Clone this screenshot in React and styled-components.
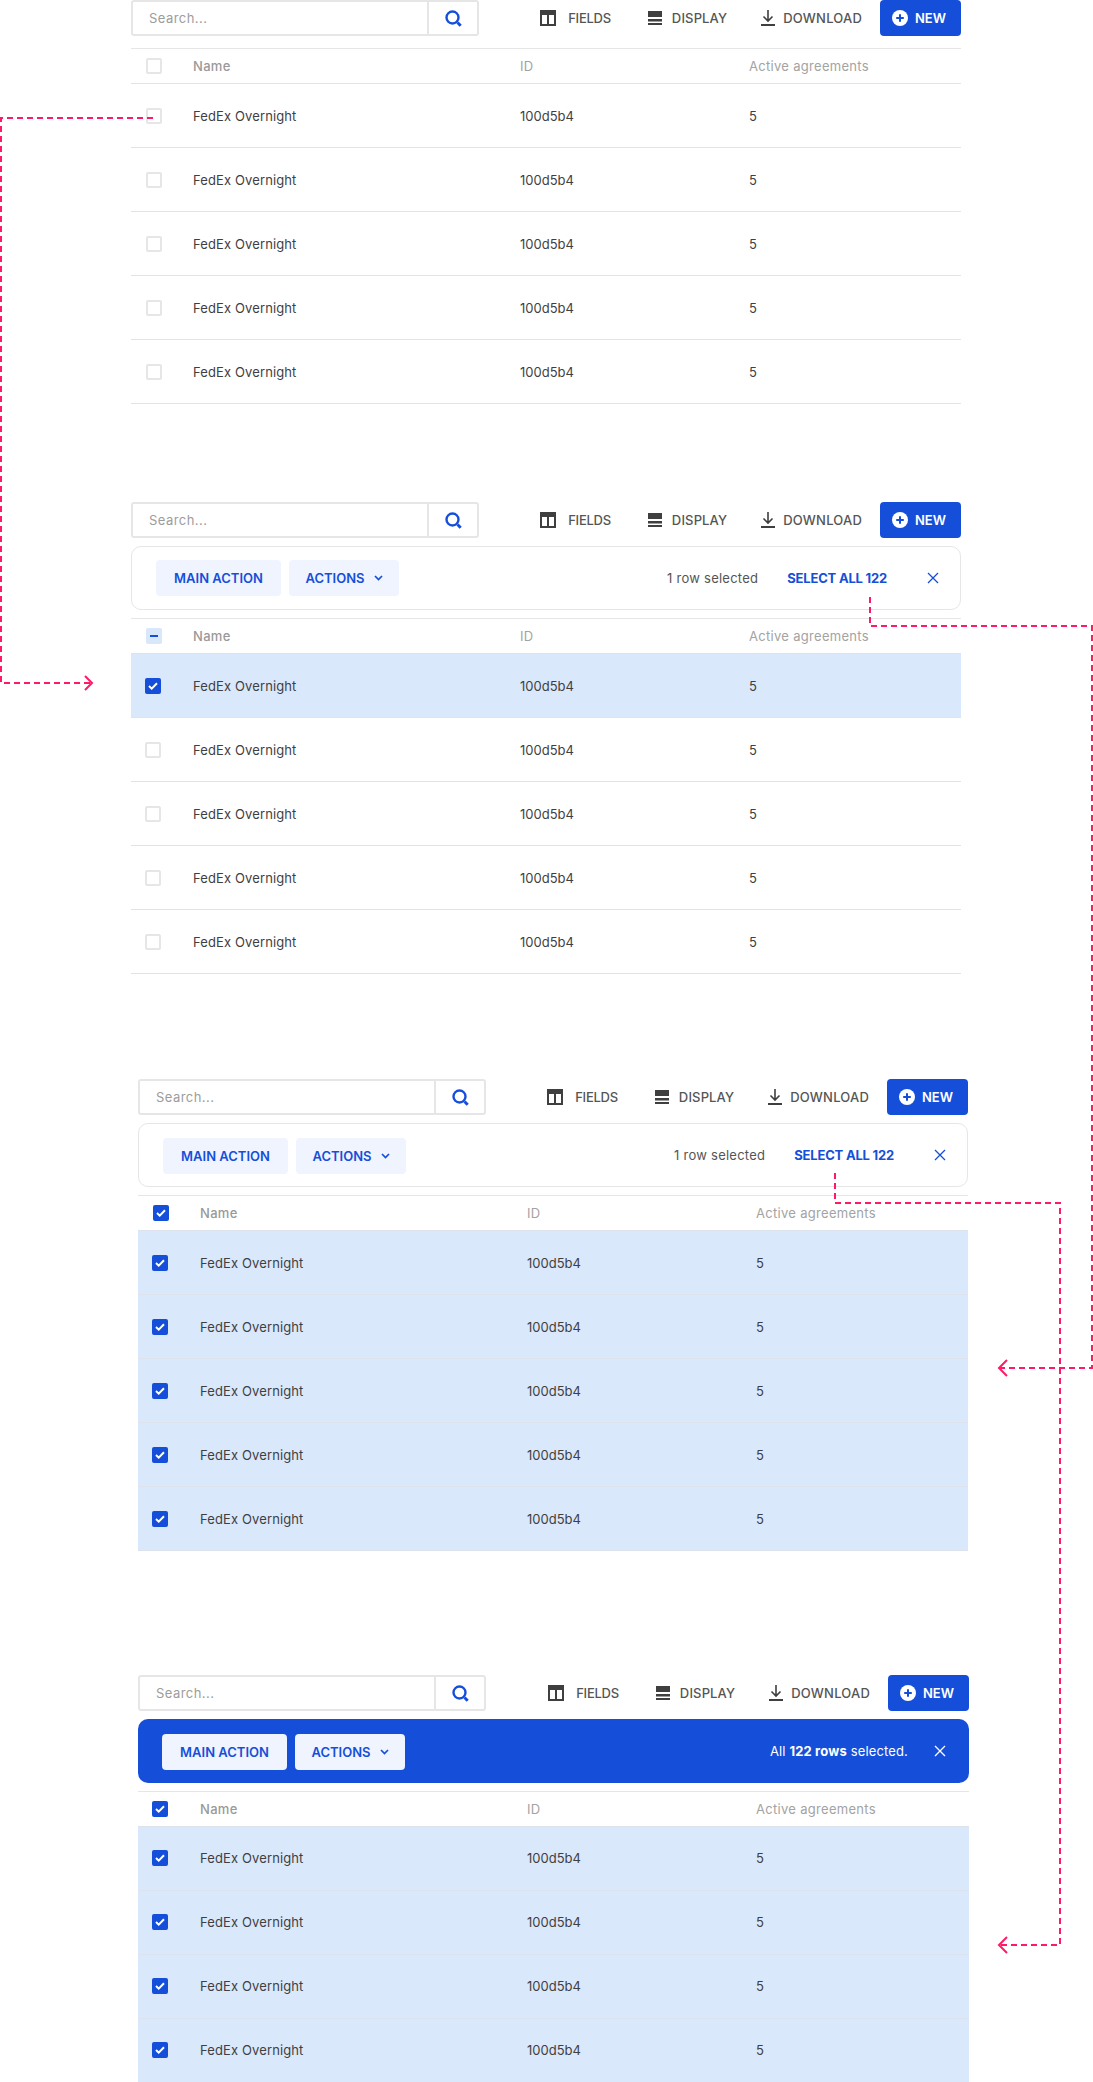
import React from "react";
import styled, { createGlobalStyle } from "styled-components";

const GlobalStyle = createGlobalStyle`
  html, body {
    margin: 0;
    padding: 0;
    background: #fff;
  }
  body {
    font-family: "Inter", "Liberation Sans", sans-serif;
    color: #3f3f3f;
  }
`;

const Page = styled.div`
  position: relative;
  width: 1093px;
  height: 2082px;
  overflow: hidden;
`;

const Section = styled.section`
  width: ${(p) => p.$width}px;
  margin-top: ${(p) => p.$top}px;
  margin-left: ${(p) => p.$left}px;
`;

const Toolbar = styled.div`
  display: flex;
  align-items: center;
  height: 36px;
`;

const SearchBox = styled.div`
  box-sizing: border-box;
  display: flex;
  width: 348px;
  height: 36px;
  border: 2px solid #e6e6e6;
  border-radius: 3px;
`;

const SearchInput = styled.div`
  flex: 1;
  padding-left: 16px;
  font-size: 13px;
  letter-spacing: 0.45px;
  line-height: 32px;
  color: #9c9c9c;
  border-right: 2px solid #e6e6e6;
`;

const SearchButton = styled.div`
  width: 48px;
  display: flex;
  align-items: center;
  justify-content: center;
`;

const ToolButtons = styled.div`
  display: flex;
  align-items: center;
  margin-left: auto;
`;

const ToolButton = styled.div`
  display: flex;
  align-items: center;
  gap: ${(p) => p.$gap}px;
  margin-right: ${(p) => p.$right}px;
  font-size: 13px;
  font-weight: 500;
  letter-spacing: ${(p) => p.$spacing}px;
  color: #555;
`;

const NewButton = styled.div`
  box-sizing: border-box;
  width: 81px;
  height: 36px;
  display: flex;
  align-items: center;
  gap: 7px;
  padding-left: 12px;
  background: #154fd9;
  border-radius: 4px;
  color: #fff;
  font-size: 13px;
  font-weight: 600;
`;

const ActionPanel = styled.div`
  box-sizing: border-box;
  display: flex;
  align-items: center;
  height: 64px;
  margin-top: 8px;
  padding: 0 24px;
  border-radius: 10px;
  border: ${(p) => (p.$solid ? "none" : "1px solid #e6e6e6")};
  background: ${(p) => (p.$solid ? "#154fd9" : "#fff")};
`;

const ActionButton = styled.div`
  box-sizing: border-box;
  display: flex;
  align-items: center;
  justify-content: center;
  gap: 9px;
  width: ${(p) => p.$width}px;
  height: 36px;
  margin-right: 8px;
  margin-top: ${(p) => (p.$drop ? 2 : 0)}px;
  background: #eff4fe;
  border-radius: 4px;
  color: #154fd9;
  font-size: 13px;
  font-weight: 600;
`;

const RowCount = styled.div`
  margin-left: auto;
  font-size: 13px;
  letter-spacing: ${(p) => (p.$solid ? "0.15px" : "0.25px")};
  color: ${(p) => (p.$solid ? "#fff" : "#555")};
  b {
    font-weight: 700;
  }
`;

const SelectAll = styled.div`
  margin-left: 29px;
  font-size: 13px;
  font-weight: 700;
  letter-spacing: -0.2px;
  color: #154fd9;
`;

const Dismiss = styled.div`
  display: flex;
  margin-left: ${(p) => (p.$solid ? 26 : 40)}px;
  margin-right: ${(p) => (p.$solid ? -1 : -3)}px;
`;

const Table = styled.div`
  margin-top: ${(p) => p.$top}px;
  border-top: 1px solid #e6e6e6;
`;

const Columns = styled.div`
  box-sizing: border-box;
  display: grid;
  grid-template-columns: ${(p) => 62 - p.$inset}px 327px 229px 1fr;
  align-items: center;
  padding-left: ${(p) => p.$inset}px;
`;

const HeadRow = styled(Columns)`
  height: 34px;
  font-size: 13px;
  letter-spacing: 0.3px;
  color: #a3a3a3;
`;

const HeadName = styled.span`
  font-weight: 500;
  color: #999;
`;

const Row = styled(Columns)`
  height: 64px;
  padding-bottom: ${(p) => (p.$lift ? 1 : 0)}px;
  font-size: 13px;
  color: #3f3f3f;
  background: ${(p) => (p.$selected ? "#dae8fc" : "#fff")};
  border-top: 1px solid ${(p) => (p.$selected ? "#dde3ec" : "#e3e3e3")};
  &:last-child {
    height: 65px;
    border-bottom: 1px solid ${(p) => (p.$selected ? "#dde3ec" : "#e3e3e3")};
  }
`;

const RowName = styled.span`
  letter-spacing: 0.12px;
`;

const Box = styled.div`
  box-sizing: border-box;
  width: 16px;
  height: 16px;
  display: flex;
  align-items: center;
  justify-content: center;
  border-radius: 2px;
  border: ${(p) => (p.$state === "empty" ? "2px solid #e6e6e6" : "none")};
  background: ${(p) =>
    p.$state === "checked" ? "#154fd9" : p.$state === "mixed" ? "#d9e7fb" : "#fff"};
`;

const Connectors = styled.svg`
  position: absolute;
  top: 0;
  left: 0;
  pointer-events: none;
`;

const SearchIcon = () => (
  <svg width="17" height="17" viewBox="0 0 17 17" fill="none" stroke="#154fd9">
    <circle cx="7.5" cy="7.5" r="6" strokeWidth="2.4" />
    <path d="M12.5 12.5l3.2 3.2" strokeWidth="3" />
  </svg>
);

const FieldsIcon = () => (
  <svg width="16" height="16" viewBox="0 0 16 16" fill="#3f3f3f">
    <path d="M0 0h16v16H0zM2 5v9h5V5zm7 0v9h5V5z" fillRule="evenodd" />
  </svg>
);

const DisplayIcon = () => (
  <svg width="14" height="14" viewBox="0 0 14 14" fill="#3f3f3f">
    <path d="M0 0h14v6H0zM0 8h14v2.5H0zM0 12h14v2H0z" />
  </svg>
);

const DownloadIcon = () => (
  <svg width="14" height="16" viewBox="0 0 14 16" fill="none" stroke="#3f3f3f">
    <path d="M7 0v10.5M2.5 6.5L7 11l4.5-4.5" strokeWidth="1.6" />
    <path d="M0 15h14" strokeWidth="2" />
  </svg>
);

const PlusIcon = () => (
  <svg width="16" height="16" viewBox="0 0 16 16">
    <circle cx="8" cy="8" r="8" fill="#fff" />
    <path d="M8 4.2v7.6M4.2 8h7.6" stroke="#154fd9" strokeWidth="2" />
  </svg>
);

const ChevronIcon = () => (
  <svg width="9" height="6" viewBox="0 0 9 6" fill="none" stroke="#154fd9" strokeWidth="1.7">
    <path d="M1 1l3.5 3.5L8 1" />
  </svg>
);

const CloseIcon = ({ color }) => (
  <svg width="12" height="12" viewBox="0 0 12 12" fill="none" stroke={color} strokeWidth="1.3">
    <path d="M1 1l10 10M11 1L1 11" />
  </svg>
);

const Checkbox = ({ state = "empty" }) => (
  <Box $state={state}>
    {state === "checked" && (
      <svg width="10" height="8" viewBox="0 0 10 8" fill="none" stroke="#fff" strokeWidth="2">
        <path d="M1 4l2.7 2.6L9 1.2" />
      </svg>
    )}
    {state === "mixed" && (
      <svg width="8" height="2" viewBox="0 0 8 2">
        <path d="M0 0h8v2H0z" fill="#154fd9" />
      </svg>
    )}
  </Box>
);

const TopBar = () => (
  <Toolbar>
    <SearchBox>
      <SearchInput>Search...</SearchInput>
      <SearchButton>
        <SearchIcon />
      </SearchButton>
    </SearchBox>
    <ToolButtons>
      <ToolButton $gap={12} $right={37} $spacing={-0.25}>
        <FieldsIcon />
        FIELDS
      </ToolButton>
      <ToolButton $gap={10} $right={34} $spacing={0.15}>
        <DisplayIcon />
        DISPLAY
      </ToolButton>
      <ToolButton $gap={8} $right={18} $spacing={0.2}>
        <DownloadIcon />
        DOWNLOAD
      </ToolButton>
      <NewButton>
        <PlusIcon />
        NEW
      </NewButton>
    </ToolButtons>
  </Toolbar>
);

const Actions = ({ solid, drop }) => (
  <ActionPanel $solid={solid}>
    <ActionButton $width={125} $drop={drop}>
      MAIN ACTION
    </ActionButton>
    <ActionButton $width={110} $drop={drop}>
      ACTIONS
      <ChevronIcon />
    </ActionButton>
    {solid ? (
      <RowCount $solid>
        All <b>122 rows</b> selected.
      </RowCount>
    ) : (
      <>
        <RowCount>1 row selected</RowCount>
        <SelectAll>SELECT ALL 122</SelectAll>
      </>
    )}
    <Dismiss $solid={solid}>
      <CloseIcon color={solid ? "#fff" : "#154fd9"} />
    </Dismiss>
  </ActionPanel>
);

const Rows = ({ count, selected, inset, lift }) =>
  Array.from({ length: count }, (_, i) => {
    const on = selected === "all" || i < selected;
    return (
      <Row key={i} $selected={on} $inset={inset} $lift={lift}>
        <Checkbox state={on ? "checked" : "empty"} />
        <RowName>FedEx Overnight</RowName>
        <span>100d5b4</span>
        <span>5</span>
      </Row>
    );
  });

const Head = ({ state, inset }) => (
  <HeadRow $inset={inset}>
    <Checkbox state={state} />
    <HeadName>Name</HeadName>
    <span>ID</span>
    <span>Active agreements</span>
  </HeadRow>
);

const Flows = () => (
  <Connectors width="1093" height="2082" fill="none" stroke="#ff1a66" strokeWidth="2">
    <path d="M153 118H1V683H92" strokeDasharray="6 4" />
    <path d="M85 676l7 7-7 7" />
    <path d="M870 597V626H1092V1368H999" strokeDasharray="6 4" />
    <path d="M1007 1360l-8 8 8 8" />
    <path d="M835 1173V1203H1060V1945H999" strokeDasharray="6 4" />
    <path d="M1007 1937l-8 8 8 8" />
  </Connectors>
);

export default function App() {
  return (
    <Page>
      <GlobalStyle />
      <Section $top={0} $left={131} $width={830}>
        <TopBar />
        <Table $top={12}>
          <Head state="empty" inset={15} />
          <Rows count={5} selected={0} inset={15} />
        </Table>
      </Section>
      <Section $top={98} $left={131} $width={830}>
        <TopBar />
        <Actions />
        <Table $top={8}>
          <Head state="mixed" inset={15} />
          <Rows count={5} selected={1} inset={14} />
        </Table>
      </Section>
      <Section $top={105} $left={138} $width={830}>
        <TopBar />
        <Actions drop />
        <Table $top={8}>
          <Head state="checked" inset={15} />
          <Rows count={5} selected="all" inset={14} />
        </Table>
      </Section>
      <Section $top={124} $left={138} $width={831}>
        <TopBar />
        <Actions solid drop />
        <Table $top={8}>
          <Head state="checked" inset={14} />
          <Rows count={4} selected="all" inset={14} lift />
        </Table>
      </Section>
      <Flows />
    </Page>
  );
}
